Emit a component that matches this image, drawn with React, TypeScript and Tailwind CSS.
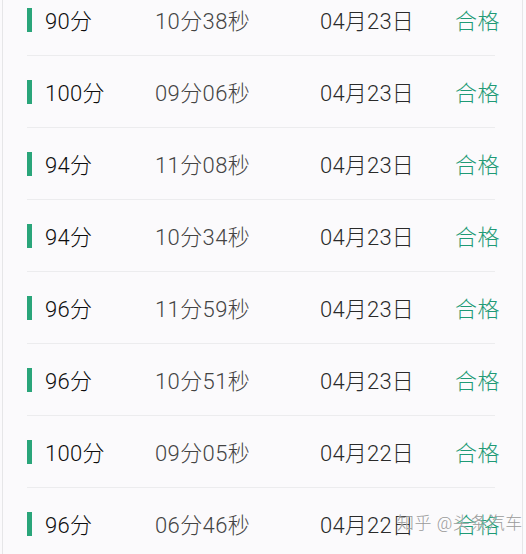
import React from "react";

const rows = [
  ["90分", "10分38秒", "04月23日"],
  ["100分", "09分06秒", "04月23日"],
  ["94分", "11分08秒", "04月23日"],
  ["94分", "10分34秒", "04月23日"],
  ["96分", "11分59秒", "04月23日"],
  ["96分", "10分51秒", "04月23日"],
  ["100分", "09分05秒", "04月22日"],
  ["96分", "06分46秒", "04月22日"],
];

export default function App() {
  return (
    <div
      className="relative w-[526px] h-[554px] overflow-hidden bg-[#fbfafc]"
      style={{ fontFamily: 'Roboto, "Noto Sans CJK SC", sans-serif' }}
    >
      <div className="absolute left-[2px] top-0 bottom-0 w-px bg-[#e6e6e8]" />
      <div className="absolute left-[522px] top-0 bottom-0 w-px bg-[#e6e6e8]" />
      <div className="mt-[-16px] flex flex-col">
        {rows.map((r, i) => (
          <div
            key={i}
            className="ml-[27px] mr-[31px] h-[72px] flex items-center border-b border-[#ececee] whitespace-nowrap"
          >
            <div className="w-[5px] h-[24px] bg-[#2aa57a] mr-[13px] shrink-0" />
            <div className="flex items-center pt-[5px]">
              <div className="w-[110px] shrink-0 text-[22px] leading-none font-light tracking-[0.3px] text-[#0d0d0d]">{r[0]}</div>
              <div className="w-[165px] shrink-0 text-[22px] leading-none font-light tracking-[0.4px] text-[#444444]">{r[1]}</div>
              <div className="w-[135px] shrink-0 text-[22px] leading-none font-light tracking-[0.2px] text-[#2a2a2a]">{r[2]}</div>
              <div className="shrink-0 text-[22px] leading-none font-light tracking-[0.5px] text-[#1f9a76]">合格</div>
            </div>
          </div>
        ))}
      </div>
      <div className="absolute left-[397px] top-[515px] text-[17px] leading-none font-light text-[#9a9a9a] tracking-[0.5px] whitespace-nowrap [text-shadow:0_0_2px_#ffffff]">
        知乎 @头条汽车
      </div>
    </div>
  );
}
